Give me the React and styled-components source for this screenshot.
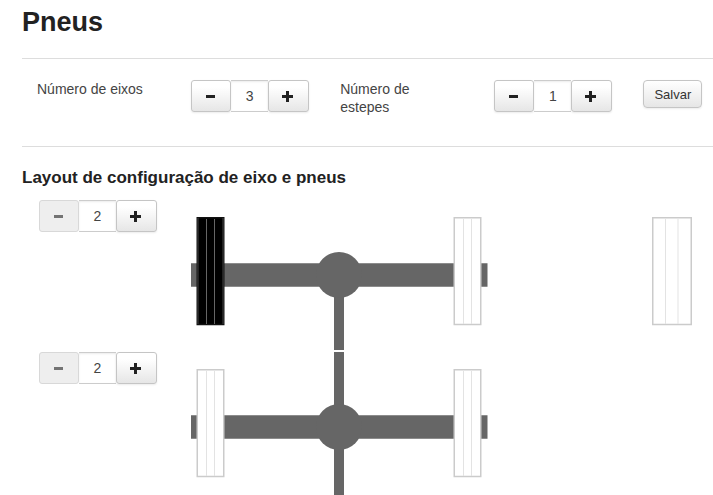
import React, { useState } from "react";
import styled, { createGlobalStyle } from "styled-components";

const MinusIcon = () => (
  <svg width="11" height="11" viewBox="0 0 11 11" aria-hidden="true">
    <path d="M1 4h9v3H1z" fill="#222" />
  </svg>
);

const PlusIcon = () => (
  <svg width="11" height="11" viewBox="0 0 11 11" aria-hidden="true">
    <path d="M4 0h3v4h4v3H7v4H4V7H0V4h4z" fill="#222" />
  </svg>
);

const Stepper = ({ id, label, value, min, onChange }) => {
  return (
    <StepperGroup>
      <StepButton
        type="button"
        aria-label="Diminuir"
        disabled={value <= min}
        onClick={() => onChange(value - 1)}
      >
        <MinusIcon />
      </StepButton>
      <StepInput
        id={id}
        aria-label={label}
        value={value}
        onChange={e => onChange(Number(e.target.value) || min)}
        type="text"
      />
      <StepButton
        type="button"
        aria-label="Aumentar"
        onClick={() => onChange(value + 1)}
      >
        <PlusIcon />
      </StepButton>
    </StepperGroup>
  );
};

const Tyre = ({ x, width = 28, grooves = [9.5, 17.5], selected }) => {
  return (
    <g>
      <rect
        x={x + 0.75}
        y="17.75"
        width={width - 1.5}
        height="106.75"
        fill={selected ? "#000" : "#fff"}
        stroke={selected ? "#111" : "#cbcbcb"}
        strokeWidth="1.5"
      />
      {selected && (
        <path
          d={`M${x + 1.5} 18v106M${x + width - 1.5} 18v106`}
          stroke="#444"
          strokeWidth="1"
        />
      )}
      {grooves.map(groove => (
        <path
          key={groove}
          d={`M${x + groove + 0.5} 19v105`}
          stroke={selected ? "#666" : "#e3e3e3"}
          strokeWidth="1"
        />
      ))}
    </g>
  );
};

const Axle = ({ first, selected }) => (
  <svg width="297" height="150" viewBox="0 0 297 150">
    <path d="M0 63.2h296.5v23.6H0z" fill="#666" />
    <path d={first ? "M143 75h10v75h-10z" : "M143 0h10v150h-10z"} fill="#666" />
    <circle cx="148" cy="75" r="23" fill="#666" />
    <Tyre x={5.5} selected={selected} />
    <Tyre x={262.5} />
  </svg>
);

const Spare = () => (
  <svg width="41" height="150" viewBox="0 0 41 150">
    <Tyre x={0} width={40} grooves={[13, 25.5]} />
  </svg>
);

const App = () => {
  const [axleCount, setAxleCount] = useState(3);
  const [spareCount, setSpareCount] = useState(1);
  const [tyres, setTyres] = useState([2, 2]);

  function changeTyres(index, value) {
    setTyres(tyres.map((count, i) => (i === index ? value : count)));
  }

  return (
    <Page>
      <GlobalStyle />
      <Title>Pneus</Title>
      <SetupForm onSubmit={e => e.preventDefault()}>
        <Label htmlFor="axles">Número de eixos</Label>
        <Stepper id="axles" value={axleCount} min={1} onChange={setAxleCount} />
        <Label htmlFor="spares">Número de estepes</Label>
        <Stepper
          id="spares"
          value={spareCount}
          min={0}
          onChange={setSpareCount}
        />
        <SaveButton type="submit">Salvar</SaveButton>
      </SetupForm>
      <Subtitle>Layout de configuração de eixo e pneus</Subtitle>
      <AxleList>
        {tyres.map((count, index) => (
          <AxleRow key={index}>
            <Stepper
              label="Pneus do eixo"
              value={count}
              min={2}
              onChange={value => changeTyres(index, value)}
            />
            <Axle first={index === 0} selected={index === 0} />
            {index === 0 && <Spare />}
          </AxleRow>
        ))}
      </AxleList>
    </Page>
  );
};

export default App;

const GlobalStyle = createGlobalStyle`
  * {
    box-sizing: border-box;
  }

  body {
    margin: 0;
    background: #fff;
    color: #444;
    font-family: "Liberation Sans", Arial, sans-serif;
    font-size: 14px;
    line-height: 18px;
  }

  svg {
    display: block;
  }
`;

const Page = styled.main`
  padding-left: 22px;
`;

const Title = styled.h1`
  margin: 0;
  padding: 6px 0 20px;
  color: #222;
  font-size: 27px;
  line-height: 32px;
`;

const SetupForm = styled.form`
  display: grid;
  grid-template-columns: 31fr 30fr 31fr 30fr 14fr;
  align-items: start;
  padding: 21px 0 30px 15px;
  border-top: 1px solid #ddd;
  border-bottom: 1px solid #ddd;
`;

const Label = styled.label`
  max-width: 120px;
`;

const StepperGroup = styled.div`
  display: flex;
  width: 118px;
  height: 32px;
`;

const StepButton = styled.button`
  display: flex;
  align-items: center;
  justify-content: center;
  width: 40px;
  padding: 0 1px 0 0;
  border: 1px solid #c5c5c5;
  border-radius: 3px;
  background: linear-gradient(#fff 20%, #e6e6e6);
  box-shadow: 0 1px 2px rgba(0, 0, 0, 0.08);
  cursor: pointer;

  &:last-child {
    width: 41px;
    padding-right: 3px;
  }

  &:disabled {
    border-color: #d8d8d8;
    background: #eee;
    box-shadow: none;
    cursor: default;
  }

  &:disabled svg {
    opacity: 0.6;
  }
`;

const StepInput = styled.input`
  flex: 1;
  min-width: 0;
  padding: 0;
  border: 1px solid #ccc;
  border-width: 1px 0;
  background: #fff;
  box-shadow: inset 0 1px 2px rgba(0, 0, 0, 0.08);
  color: #444;
  font: inherit;
  text-align: center;
`;

const SaveButton = styled.button`
  justify-self: start;
  height: 28px;
  padding: 0 10px;
  border: 1px solid #c5c5c5;
  border-radius: 4px;
  background: linear-gradient(#fff, #e6e6e6);
  box-shadow: 0 1px 2px rgba(0, 0, 0, 0.08);
  color: #333;
  font-family: inherit;
  font-size: 13px;
  cursor: pointer;
`;

const Subtitle = styled.h2`
  margin: 0;
  padding: 21px 0 12px;
  color: #222;
  font-size: 17px;
  line-height: 20px;
`;

const AxleList = styled.section`
  display: grid;
  gap: 2px;
  padding-left: 17px;
`;

const AxleRow = styled.div`
  display: grid;
  grid-template-columns: 152px 1fr 61px;
  align-items: start;
`;
